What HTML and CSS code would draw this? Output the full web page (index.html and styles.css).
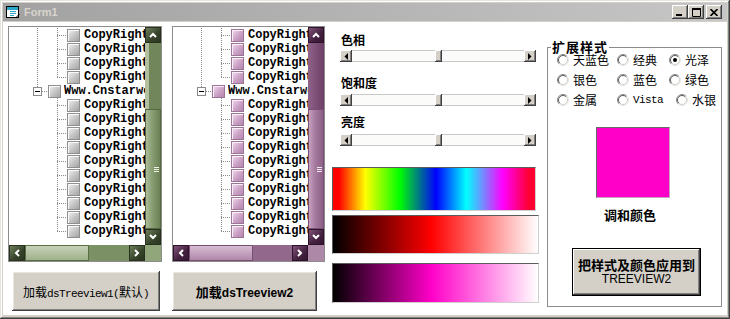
FILE: index.html
```html
<!DOCTYPE html>
<html lang="zh-CN">
<head>
<meta charset="utf-8">
<title>Form1</title>
<link rel="stylesheet" href="styles.css">
</head>
<body>
<svg class="defs" width="0" height="0" aria-hidden="true">
  <symbol id="radio" viewBox="0 0 12 12">
    <circle cx="6" cy="6" r="5.5" fill="#fff"/>
    <path d="M2.1 9.9A5.5 5.5 0 0 1 9.9 2.1" fill="none" stroke="#8a8a8a"/>
    <path d="M9.9 2.1A5.5 5.5 0 0 1 2.1 9.9" fill="none" stroke="#e4e4e4"/>
    <path d="M2.8 9.2A4.5 4.5 0 0 1 9.2 2.8" fill="none" stroke="#5a5a5a"/>
    <path d="M9.2 2.8A4.5 4.5 0 0 1 2.8 9.2" fill="none" stroke="#d4d0c8"/>
  </symbol>
  <symbol id="chev-up" viewBox="0 0 8 6"><path d="M1 5L4 2L7 5" fill="none" stroke="#fff" stroke-width="2"/></symbol>
  <symbol id="chev-down" viewBox="0 0 8 6"><path d="M1 1L4 4L7 1" fill="none" stroke="#fff" stroke-width="2"/></symbol>
  <symbol id="chev-left" viewBox="0 0 6 8"><path d="M5 1L2 4L5 7" fill="none" stroke="#fff" stroke-width="2"/></symbol>
  <symbol id="chev-right" viewBox="0 0 6 8"><path d="M1 1L4 4L1 7" fill="none" stroke="#fff" stroke-width="2"/></symbol>
  <symbol id="tri-left" viewBox="0 0 4 7"><path d="M4 0V7L0.5 3.5Z" fill="#000"/></symbol>
  <symbol id="tri-right" viewBox="0 0 4 7"><path d="M0 0V7L3.5 3.5Z" fill="#000"/></symbol>
</svg>

<div class="window">
  <div class="titlebar">
    <svg class="app-icon" width="16" height="14" viewBox="0 0 16 14">
      <rect x="1.5" y="1.5" width="12" height="11" fill="#fff" stroke="#000"/>
      <rect x="2" y="2" width="11" height="3" fill="#2aa6c8"/>
      <path d="M5 6.5H11M5 8.5H11M5 10.5H9" stroke="#2aa6c8"/>
      <path d="M11 12.5L14.5 9" stroke="#000"/>
    </svg>
    <span class="title">Form1</span>
    <div class="caps">
      <span class="cap"><svg width="8" height="7" viewBox="0 0 8 7"><rect x="0" y="5" width="6" height="2" fill="#000"/></svg></span>
      <span class="cap"><svg width="9" height="9" viewBox="0 0 9 9"><path d="M0.5 1.5H8.5V8.5H0.5Z" fill="none" stroke="#000"/><rect x="0" y="0" width="9" height="2" fill="#000"/></svg></span>
      <span class="cap close"><svg width="8" height="7" viewBox="0 0 8 7"><path d="M0.5 0L7.5 7M7.5 0L0.5 7" stroke="#000" stroke-width="1.6"/></svg></span>
    </div>
  </div>

  <div class="client">
    <div class="left">
      <div class="tree green">
        <div class="tv">
          <div class="row child root"><i class="ico"></i><span class="t">CopyRight</span></div>
          <div class="row child root"><i class="ico"></i><span class="t">CopyRight</span></div>
          <div class="row child root"><i class="ico"></i><span class="t">CopyRight</span></div>
          <div class="row child root last"><i class="ico"></i><span class="t">CopyRight</span></div>
          <div class="row www"><i class="box"></i><i class="ico"></i><span class="t">Www.Cnstarweb.Com</span></div>
          <div class="row child"><i class="ico"></i><span class="t">CopyRight</span></div>
          <div class="row child"><i class="ico"></i><span class="t">CopyRight</span></div>
          <div class="row child"><i class="ico"></i><span class="t">CopyRight</span></div>
          <div class="row child"><i class="ico"></i><span class="t">CopyRight</span></div>
          <div class="row child"><i class="ico"></i><span class="t">CopyRight</span></div>
          <div class="row child"><i class="ico"></i><span class="t">CopyRight</span></div>
          <div class="row child"><i class="ico"></i><span class="t">CopyRight</span></div>
          <div class="row child"><i class="ico"></i><span class="t">CopyRight</span></div>
          <div class="row child"><i class="ico"></i><span class="t">CopyRight</span></div>
          <div class="row child last"><i class="ico"></i><span class="t">CopyRight</span></div>
        </div>
        <div class="vsb">
          <span class="sb-btn"><svg width="8" height="6"><use href="#chev-up"/></svg></span>
          <span class="vtrack"></span>
          <span class="vthumb"></span>
          <span class="sb-btn"><svg width="8" height="6"><use href="#chev-down"/></svg></span>
        </div>
        <div class="hsb">
          <span class="sb-btn"><svg width="6" height="8"><use href="#chev-left"/></svg></span>
          <span class="hthumb"></span>
          <span class="htrack"></span>
          <span class="sb-btn"><svg width="6" height="8"><use href="#chev-right"/></svg></span>
        </div>
        <div class="corner"></div>
      </div>

      <div class="tree purple">
        <div class="tv">
          <div class="row child root"><i class="ico"></i><span class="t">CopyRight</span></div>
          <div class="row child root"><i class="ico"></i><span class="t">CopyRight</span></div>
          <div class="row child root"><i class="ico"></i><span class="t">CopyRight</span></div>
          <div class="row child root last"><i class="ico"></i><span class="t">CopyRight</span></div>
          <div class="row www"><i class="box"></i><i class="ico"></i><span class="t">Www.Cnstarweb.Com</span></div>
          <div class="row child"><i class="ico"></i><span class="t">CopyRight</span></div>
          <div class="row child"><i class="ico"></i><span class="t">CopyRight</span></div>
          <div class="row child"><i class="ico"></i><span class="t">CopyRight</span></div>
          <div class="row child"><i class="ico"></i><span class="t">CopyRight</span></div>
          <div class="row child"><i class="ico"></i><span class="t">CopyRight</span></div>
          <div class="row child"><i class="ico"></i><span class="t">CopyRight</span></div>
          <div class="row child"><i class="ico"></i><span class="t">CopyRight</span></div>
          <div class="row child"><i class="ico"></i><span class="t">CopyRight</span></div>
          <div class="row child"><i class="ico"></i><span class="t">CopyRight</span></div>
          <div class="row child last"><i class="ico"></i><span class="t">CopyRight</span></div>
        </div>
        <div class="vsb">
          <span class="sb-btn"><svg width="8" height="6"><use href="#chev-up"/></svg></span>
          <span class="vtrack"></span>
          <span class="vthumb"></span>
          <span class="sb-btn"><svg width="8" height="6"><use href="#chev-down"/></svg></span>
        </div>
        <div class="hsb">
          <span class="sb-btn"><svg width="6" height="8"><use href="#chev-left"/></svg></span>
          <span class="hthumb"></span>
          <span class="htrack"></span>
          <span class="sb-btn"><svg width="6" height="8"><use href="#chev-right"/></svg></span>
        </div>
        <div class="corner"></div>
      </div>

      <button class="btn load1">加载<span class="mono">dsTreeview1(</span>默认<span class="mono">)</span></button>
      <button class="btn load2"><b>加载</b><span class="arial">dsTreeview2</span></button>
    </div>

    <div class="mid">
      <div class="lbl l1">色相</div>
      <div class="hs s1">
        <span class="hs-btn"><svg width="4" height="7"><use href="#tri-left"/></svg></span>
        <span class="hs-track"></span>
        <span class="hs-thumb"></span>
        <span class="hs-rest"></span>
        <span class="hs-btn"><svg width="4" height="7"><use href="#tri-right"/></svg></span>
      </div>
      <div class="lbl l2">饱和度</div>
      <div class="hs s2">
        <span class="hs-btn"><svg width="4" height="7"><use href="#tri-left"/></svg></span>
        <span class="hs-track"></span>
        <span class="hs-thumb"></span>
        <span class="hs-rest"></span>
        <span class="hs-btn"><svg width="4" height="7"><use href="#tri-right"/></svg></span>
      </div>
      <div class="lbl l3">亮度</div>
      <div class="hs s3">
        <span class="hs-btn"><svg width="4" height="7"><use href="#tri-left"/></svg></span>
        <span class="hs-track"></span>
        <span class="hs-thumb"></span>
        <span class="hs-rest"></span>
        <span class="hs-btn"><svg width="4" height="7"><use href="#tri-right"/></svg></span>
      </div>
      <div class="bar hue"></div>
      <div class="bar red"></div>
      <div class="bar pink"></div>
    </div>

    <fieldset class="group">
      <legend>扩展样式</legend>
      <div class="opts">
        <label class="opt"><svg width="12" height="12"><use href="#radio"/></svg><span>天蓝色</span></label>
        <label class="opt"><svg width="12" height="12"><use href="#radio"/></svg><span>经典</span></label>
        <label class="opt"><svg width="12" height="12"><use href="#radio"/><circle cx="6" cy="6" r="2" fill="#000"/></svg><span>光泽</span></label>
        <label class="opt"><svg width="12" height="12"><use href="#radio"/></svg><span>银色</span></label>
        <label class="opt"><svg width="12" height="12"><use href="#radio"/></svg><span>蓝色</span></label>
        <label class="opt"><svg width="12" height="12"><use href="#radio"/></svg><span>绿色</span></label>
        <label class="opt"><svg width="12" height="12"><use href="#radio"/></svg><span>金属</span></label>
        <label class="opt"><svg width="12" height="12"><use href="#radio"/></svg><span class="mono">Vista</span></label>
        <label class="opt shift"><svg width="12" height="12"><use href="#radio"/></svg><span>水银</span></label>
      </div>
      <div class="swatch"></div>
      <div class="swatch-lbl">调和颜色</div>
      <button class="apply"><b class="ln">把样式及颜色应用到</b><span class="ln arial">TREEVIEW2</span></button>
    </fieldset>
  </div>
</div>
</body>
</html>
```
FILE: styles.css
```css
* { box-sizing: border-box; }
html, body { margin: 0; padding: 0; }
body {
  width: 730px;
  height: 319px;
  overflow: hidden;
  background: #fff;
  font-family: "Noto Sans CJK SC", sans-serif;
  font-size: 12px;
  color: #000;
}
.defs { position: absolute; width: 0; height: 0; }

.window {
  width: 730px;
  height: 319px;
  background: #d4d0c8;
  padding: 3px 3px 4px 3px;
  display: flex;
  flex-direction: column;
  gap: 1px;
  box-shadow: inset -1px -1px #404040, inset 1px 1px #e6e4de, inset -2px -2px #808080, inset 2px 2px #fff;
}

/* title bar */
.titlebar {
  height: 18px;
  flex: none;
  display: flex;
  align-items: center;
  padding-left: 2px;
  background: linear-gradient(to right, #a2a2a2, #c6c6c6);
}
.app-icon { flex: none; }
.title {
  margin-left: 3px;
  font: bold 11px/18px "Liberation Sans", sans-serif;
  color: #d8d4cc;
}
.caps { margin-left: auto; margin-right: 5px; display: flex; }
.cap {
  width: 16px;
  height: 14px;
  background: #d4d0c8;
  display: grid;
  place-items: center;
  box-shadow: inset -1px -1px #404040, inset 1px 1px #fff, inset -2px -2px #808080;
}
.cap svg { display: block; }
.cap.close { margin-left: 2px; }

/* client */
.client {
  flex: 1;
  background: #fff;
  display: flex;
  align-items: flex-start;
  padding: 4px 0 0 5px;
}

.left {
  display: grid;
  grid-template-columns: 154px 153px;
  grid-template-rows: 236px 40px;
  column-gap: 10px;
  row-gap: 9px;
}

/* tree views */
.tree {
  --dv: repeating-linear-gradient(to bottom, #8a8a8a 0 1px, transparent 1px 2px);
  --dh: repeating-linear-gradient(to right, #8a8a8a 0 1px, transparent 1px 2px);
  display: grid;
  grid-template-columns: 1fr 16px;
  grid-template-rows: 1fr 16px;
  border: 1px solid #8c8c8c;
  background: #fff;
  overflow: hidden;
}
.tv { overflow: hidden; padding-top: 1px; min-width: 0; }
.row {
  height: 14px;
  display: flex;
  align-items: center;
  white-space: nowrap;
  background-repeat: no-repeat;
}
.child {
  padding-left: 58px;
  background-image: var(--dh), var(--dv);
  background-size: 10px 1px, 1px 14px;
  background-position: 48px 7px, 48px 0;
}
.child.last { background-size: 10px 1px, 1px 8px; }
.child.root {
  background-image: var(--dh), var(--dv), var(--dv);
  background-size: 10px 1px, 1px 14px, 1px 14px;
  background-position: 48px 7px, 48px 0, 28px 0;
}
.child.root.last { background-size: 10px 1px, 1px 8px, 1px 14px; }
.www {
  padding-left: 24px;
  background-image: var(--dv), var(--dh);
  background-size: 1px 3px, 6px 1px;
  background-position: 28px 0, 33px 7px;
}
.box {
  flex: none;
  align-self: flex-start;
  margin-top: 3px;
  width: 9px;
  height: 9px;
  border: 1px solid #8a8a8a;
  background: linear-gradient(#000, #000) center / 5px 1px no-repeat, #fff;
}
.ico {
  flex: none;
  width: 13px;
  height: 13px;
  border: 1px solid #8e8e8e;
}
.www .ico { margin-left: 6px; }
.t {
  margin-left: 4px;
  min-width: 0;
  overflow: hidden;
  font: bold 12px/14px "Liberation Mono", monospace;
}
.www .t { margin-left: 3px; }

.green .ico {
  background: linear-gradient(135deg, #f2f2f2, #c4c4c4 55%, #a4a4a4);
  box-shadow: inset 1px 1px #fafafa;
}
.purple .ico {
  border-color: #9b7596;
  background: linear-gradient(135deg, #f4dcf0, #cca2c6 55%, #b486ae);
  box-shadow: inset 1px 1px #faeef8;
}

.vsb { display: flex; flex-direction: column; }
.hsb { display: flex; min-width: 0; }
.sb-btn {
  flex: none;
  width: 16px;
  height: 16px;
  display: grid;
  place-items: center;
}
.sb-btn svg { display: block; }
.vtrack { height: 66px; flex: none; }
.vthumb { flex: 1; background-repeat: no-repeat; }
.hthumb { width: 64px; flex: none; }
.htrack { flex: 1; }

/* green skin */
.green .sb-btn {
  background: linear-gradient(135deg, #6e7f5a, #36432a 60%, #2a3520);
  border: 1px solid #27311d;
}
.green .vtrack { background: linear-gradient(to right, #b2c09f 0 4px, #71865b 4px); }
.green .vthumb {
  border: 1px solid #56683f;
  background:
    linear-gradient(#eef3e6, #eef3e6) 8px 50% / 5px 1px no-repeat,
    linear-gradient(#eef3e6, #eef3e6) 8px calc(50% - 2px) / 5px 1px no-repeat,
    linear-gradient(#eef3e6, #eef3e6) 8px calc(50% + 2px) / 5px 1px no-repeat,
    linear-gradient(to right, #aebd9b, #8aa075 40%, #6b8155);
}
.green .hthumb {
  border: 1px solid #5a6d44;
  background: linear-gradient(#c6d1b8, #9fb18b);
}
.green .htrack { background: #7b9165; }
.green .corner { background: #91a67b; }

/* purple skin */
.purple .sb-btn {
  background: linear-gradient(135deg, #7f5479, #44203f 60%, #341731);
  border: 1px solid #2e122b;
}
.purple .vtrack { background: linear-gradient(to right, #8f6289, #6d3f67); }
.purple .vthumb {
  border: 1px solid #7a4f74;
  background:
    linear-gradient(#f6eaf4, #f6eaf4) 8px 50% / 5px 1px no-repeat,
    linear-gradient(#f6eaf4, #f6eaf4) 8px calc(50% - 2px) / 5px 1px no-repeat,
    linear-gradient(#f6eaf4, #f6eaf4) 8px calc(50% + 2px) / 5px 1px no-repeat,
    linear-gradient(to right, #c6a2c0, #a87da2 40%, #8c5f86);
}
.purple .hthumb {
  border: 1px solid #7a4f74;
  background: linear-gradient(#d8bcd2, #b088aa);
}
.purple .htrack { background: #93688d; }
.purple .corner { background: #ad88a7; }

/* push buttons */
.btn {
  margin: 0;
  padding: 0;
  border: none;
  background: #d4d0c8;
  box-shadow: inset -1px -1px #404040, inset 1px 1px #fff, inset -2px -2px #808080, inset 2px 2px #e8e6e0;
  font-family: "Noto Sans CJK SC", sans-serif;
  font-size: 12px;
  color: #000;
  white-space: nowrap;
}
.load1 { width: 148px; margin-left: 4px; }
.load2 { width: 145px; }
.mono {
  font-family: "Liberation Mono", monospace;
  font-size: 11px;
  letter-spacing: -0.6px;
}
.load2 b { font-weight: bold; font-size: 13px; }
.arial { font-family: "Liberation Sans", sans-serif; }
.load2 .arial { font-weight: bold; font-size: 12px; }

/* middle column */
.mid {
  margin-left: 7px;
  width: 208px;
  display: flex;
  flex-direction: column;
}
.lbl {
  font-weight: bold;
  font-size: 12px;
  line-height: 16px;
  padding-left: 9px;
}
.l1 { margin-top: 6px; }
.l2 { margin-top: 13px; }
.l3 { margin-top: 8px; }
.hs {
  display: flex;
  width: 196px;
  height: 12px;
  margin-left: 8px;
  background: #fbfbf9;
}
.s1 { margin-top: 2px; }
.s2 { margin-top: 3px; }
.s3 { margin-top: 4px; }
.hs-btn, .hs-thumb {
  flex: none;
  background: #d4d0c8;
  box-shadow: inset -1px -1px #404040, inset 1px 1px #fff, inset -2px -2px #808080;
}
.hs-btn { width: 12px; display: grid; place-items: center; }
.hs-btn svg { display: block; }
.hs-thumb { width: 7px; }
.hs-track { width: 83px; flex: none; box-shadow: inset 0 1px #c8c8c8, inset 0 -1px #c8c8c8; }
.hs-rest { flex: 1; box-shadow: inset 0 1px #c8c8c8, inset 0 -1px #c8c8c8; }

.bar {
  border: 1px solid;
  border-color: #5c5c5c #cfcfcf #cfcfcf #5c5c5c;
}
.hue {
  margin-top: 21px;
  width: 204px;
  height: 44px;
  background: linear-gradient(to right, #ff0000 0%, #ff0000 3%, #ffff00 16%, #00ff00 33%, #0000ff 51%, #00ffff 66%, #ff00ff 84%, #ff0033 97%);
}
.red {
  margin-top: 4px;
  width: 207px;
  height: 39px;
  background: linear-gradient(to right, #000 0%, #ff0000 48%, #fff 100%);
}
.pink {
  margin-top: 9px;
  width: 207px;
  height: 40px;
  background: linear-gradient(to right, #000 0%, #ff00c8 48%, #fff 100%);
}

/* group */
.group {
  margin: 15px 0 0 7px;
  padding: 0;
  width: 175px;
  height: 266px;
  min-inline-size: 0;
  border: 1px solid #8c8c8c;
  display: flex;
  flex-direction: column;
  align-items: flex-start;
}
.group legend {
  margin-left: 3px;
  padding: 0 1px;
  font-weight: bold;
  font-size: 13px;
  line-height: 12px;
  letter-spacing: 1px;
}
.opts {
  display: grid;
  grid-template-columns: 60px 52px auto;
  grid-auto-rows: 14px;
  row-gap: 6px;
  margin: 0 0 0 9px;
}
.opt {
  display: flex;
  align-items: center;
  white-space: nowrap;
  font-size: 12px;
}
.opt svg { flex: none; display: block; }
.opt span { margin-left: 4px; line-height: 14px; }
.opt .mono { font-size: 11px; }
.opt.shift { margin-left: 7px; }

.swatch {
  margin: 20px 0 0 48px;
  width: 74px;
  height: 71px;
  background: #ff00c8;
  border: 1px solid;
  border-color: #6a6a6a #c9a7c2 #c9a7c2 #6a6a6a;
}
.swatch-lbl {
  margin: 10px 0 0 56px;
  font-weight: bold;
  font-size: 13px;
  line-height: 14px;
}
.apply {
  margin: 26px 0 0 24px;
  padding: 0;
  width: 129px;
  height: 48px;
  border: 1px solid #000;
  background: #d4d0c8;
  box-shadow: inset -1px -1px #404040, inset 1px 1px #fff, inset -2px -2px #808080;
  display: flex;
  flex-direction: column;
  align-items: center;
  justify-content: center;
  font-family: "Noto Sans CJK SC", sans-serif;
  color: #000;
  white-space: nowrap;
}
.apply .ln { display: block; height: 15px; line-height: 15px; }
.apply b { font-size: 13px; font-weight: bold; }
.apply .arial { font-size: 12px; }
```
